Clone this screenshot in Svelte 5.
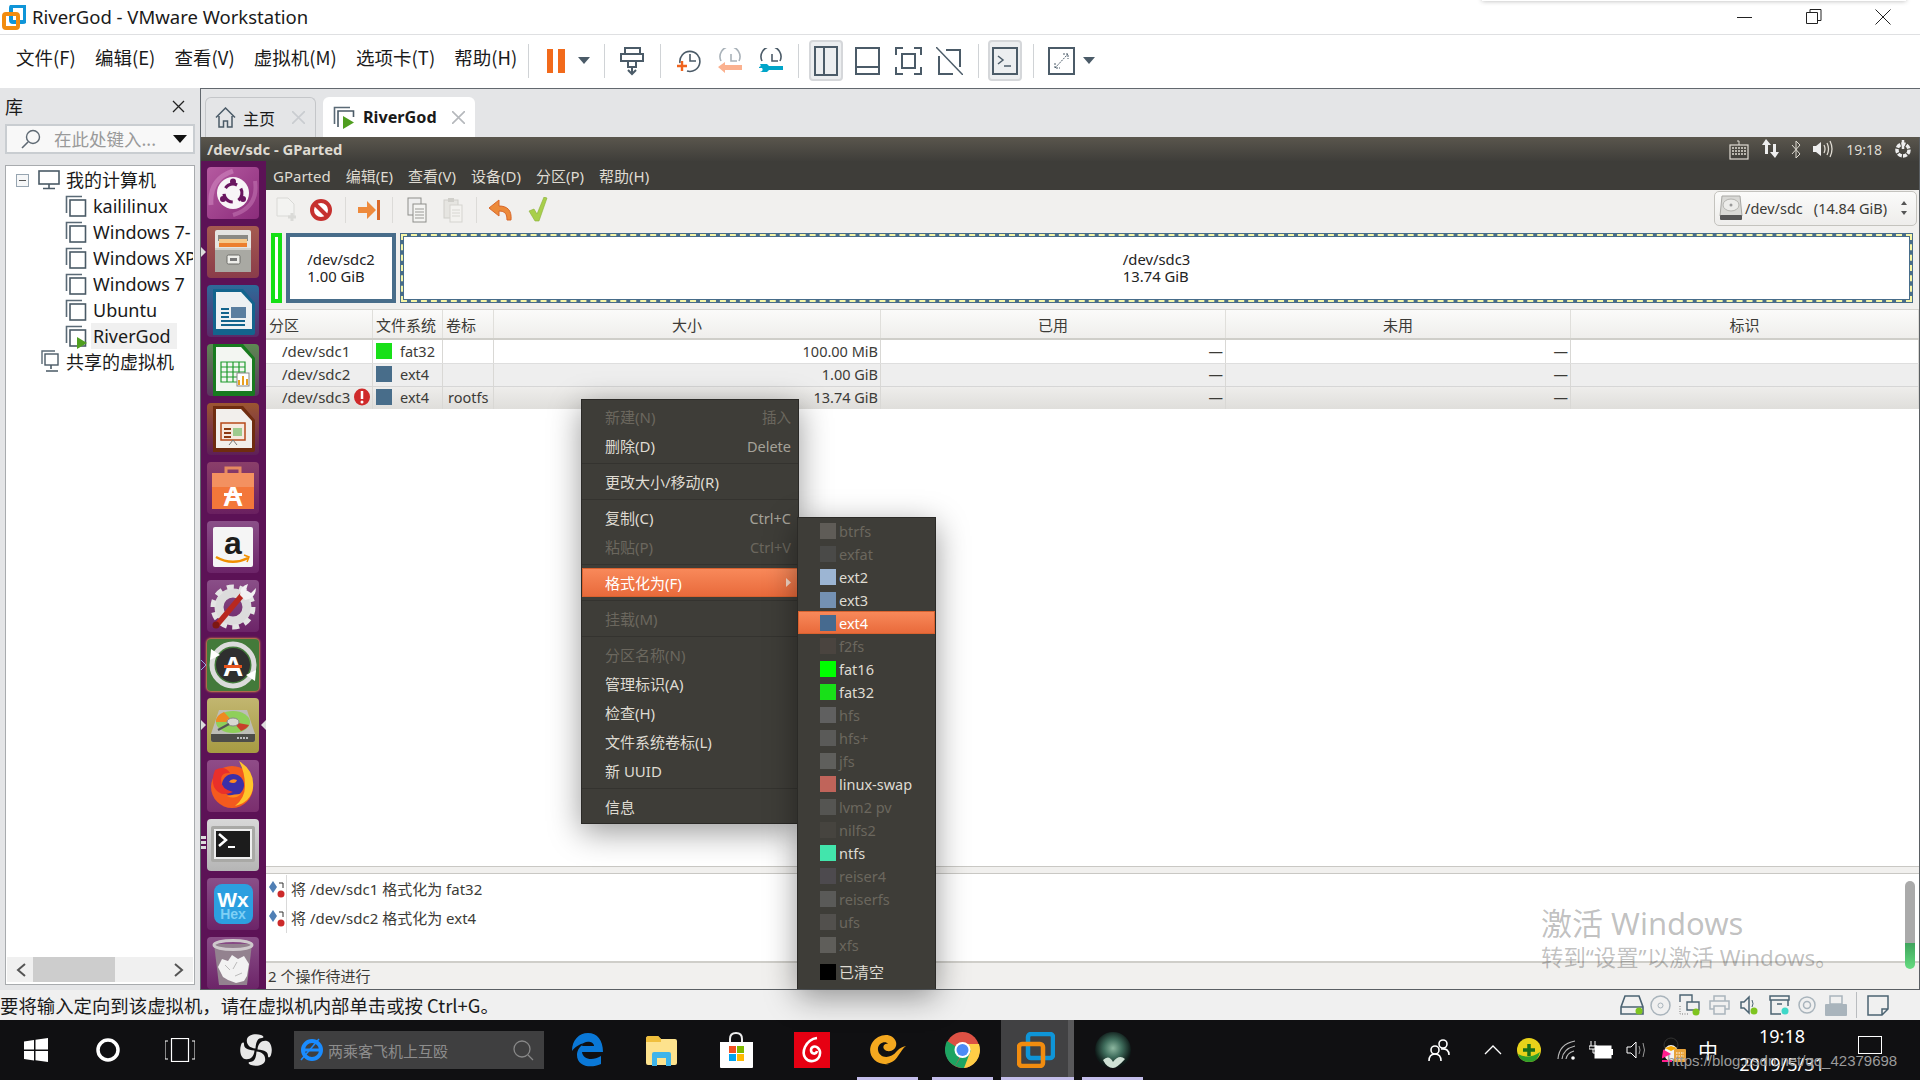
<script>
  const vmNames = ['kaililinux', 'Windows 7-', 'Windows XP', 'Windows 7', 'Ubuntu'];
  const columns = ['分区', '文件系统', '卷标', '大小', '已用', '未用', '标识'];
  const filesystems = [
    ['btrfs', '#5f5c57', 0], ['exfat', '#4a4a48', 0], ['ext2', '#9cb5d3', 1], ['ext3', '#7491b3', 1],
    ['ext4', '#466a8f', 2], ['f2fs', '#4a443f', 0], ['fat16', '#00ff00', 1], ['fat32', '#18e018', 1],
    ['hfs', '#606060', 0], ['hfs+', '#5a5a58', 0], ['jfs', '#5f5f5c', 0], ['linux-swap', '#c0645a', 1],
    ['lvm2 pv', '#555552', 0], ['nilfs2', '#46443f', 0], ['ntfs', '#42e5ac', 1], ['reiser4', '#4d4a4e', 0],
    ['reiserfs', '#5a5a58', 0], ['ufs', '#52504d', 0], ['xfs', '#5f5e5a', 0]
  ];
  const tileKinds = ['ubuntu','files','writer','calc','impress','store','amazon','tools','updater','gparted','firefox','terminal','wxhex','trash'];
</script>

{#snippet vmIcon(run)}
  <svg class="vmi" viewBox="0 0 22 24" width="22" height="24">
    <path d="M1.5 19V2.5H17" fill="none" stroke="#5a6a76" stroke-width="1.6"/>
    <rect x="5" y="6" width="15.5" height="16" fill="#fff" stroke="#4a5a66" stroke-width="1.6"/>
    {#if run}<path d="M12 13l10 6-10 6z" fill="#4f9e1f"/>{/if}
  </svg>
{/snippet}

{#snippet swatch(color)}
  <i class="swatch" style:background={color}></i>
{/snippet}

<div class="screen">
  <header class="title">
    <svg width="24" height="25" viewBox="0 0 24 25"><rect x="9" y="1" width="14" height="16" rx="2" fill="none" stroke="#0f95d8" stroke-width="4"/><rect x="2" y="9" width="14" height="14" rx="2" fill="none" stroke="#f28c0f" stroke-width="4"/></svg>
    <span class="title-text">RiverGod - VMware Workstation</span>
    <div class="win-btns">
      <svg width="16" height="16" viewBox="0 0 16 16"><path d="M0 8.5h15" stroke="#222" stroke-width="1"/></svg>
      <svg width="16" height="16" viewBox="0 0 16 16"><path d="M4 3V.5h11v11h-3M.5 3.5h11v11H.5z" fill="none" stroke="#222"/></svg>
      <svg width="16" height="16" viewBox="0 0 16 16"><path d="M.5.5l15 15M15.5.5l-15 15" stroke="#222" fill="none"/></svg>
    </div>
    <div class="title-shadow"></div>
  </header>

  <div class="bar">
    <nav class="menu">
      <span>文件(F)</span><span>编辑(E)</span><span>查看(V)</span><span>虚拟机(M)</span><span>选项卡(T)</span><span>帮助(H)</span>
    </nav>
    <i class="sep"></i>
    <svg class="ml18" width="18" height="24" viewBox="0 0 18 24"><path d="M0 0h6v24H0zM11 0h7v24h-7z" fill="#f26a1b"/></svg>
    <svg class="ml13" width="12" height="7" viewBox="0 0 12 7"><path d="M0 0h12L6 7z" fill="#4b5b68"/></svg>
    <i class="sep ml14"></i>
    <svg class="ml15" width="24" height="30" viewBox="0 0 24 30"><g fill="none" stroke="#4b5b68" stroke-width="2"><path d="M5 8V2h15v6"/><rect x="1" y="8" width="22" height="7"/><path d="M8 15v6h8v-6M12 21v6M8 24l4 4 4-4"/></g></svg>
    <i class="sep ml16"></i>
    <svg class="ml16" width="24" height="26" viewBox="0 0 24 26"><g fill="none" stroke="#4b5b68" stroke-width="1.6"><path d="M3 15a10 10 0 1 1 7 8"/><path d="M13 6v7h6"/></g><path d="M5 13v10M0 18h10" stroke="#f0641e" stroke-width="2.4"/></svg>
    <svg class="ml17" width="24" height="26" viewBox="0 0 24 26"><g fill="none" stroke="#a9b2b9" stroke-width="1.6"><path d="M3 13a10 10 0 1 1 18 0"/><path d="M13 6v7h6"/></g><path d="M0 19l7-5v3h17v5H7v3z" fill="#fbb18f"/></svg>
    <svg class="ml17" width="24" height="26" viewBox="0 0 24 26"><g fill="none" stroke="#4b5b68" stroke-width="1.6"><path d="M3 13a10 10 0 1 1 18 0"/><path d="M13 6v7h6"/></g><path d="M1 16h7l2 2h14v4H10l-2 2H1c3-1 3-3 2-4H0v-1c2 0 2-2 1-3z" fill="#00a5c9"/></svg>
    <i class="sep ml15"></i>
    <span class="toggle ml10"><svg width="24" height="30" viewBox="0 0 24 30"><rect x="1" y="1" width="22" height="28" fill="none" stroke="#4b5b68" stroke-width="2"/><path d="M10 1v28" stroke="#4b5b68" stroke-width="2"/></svg></span>
    <svg class="ml12" width="25" height="28" viewBox="0 0 25 28"><rect x="1" y="1" width="23" height="26" fill="none" stroke="#4b5b68" stroke-width="2"/><path d="M1 20h23" stroke="#4b5b68" stroke-width="2"/></svg>
    <svg class="ml15" width="27" height="28" viewBox="0 0 27 28"><g fill="none" stroke="#4b5b68" stroke-width="2"><rect x="7" y="7" width="13" height="14"/><path d="M1 8V1h7M19 1h7v7M1 20v7h7M19 27h7v-7"/></g></svg>
    <svg class="ml14" width="27" height="28" viewBox="0 0 27 28"><g fill="none" stroke="#4b5b68" stroke-width="2"><path d="M3 9v18h14M24 20V3H10"/><path d="M0 0l27 28" stroke-width="1.5"/></g></svg>
    <i class="sep ml15"></i>
    <span class="toggle ml9"><svg width="26" height="28" viewBox="0 0 26 28"><rect x="1" y="1" width="24" height="26" fill="none" stroke="#4b5b68" stroke-width="2"/><path d="M6 9l5 4-5 4M12 19h7" fill="none" stroke="#4b5b68" stroke-width="1.5"/></svg></span>
    <i class="sep ml11"></i>
    <svg class="ml14" width="27" height="28" viewBox="0 0 27 28"><rect x="1" y="1" width="25" height="26" fill="none" stroke="#4b5b68" stroke-width="2"/><path d="M7 21L20 7M15 7h5v5M7 16v5h5" fill="none" stroke="#4b5b68" stroke-dasharray="2 1"/></svg>
    <svg class="ml8" width="12" height="7" viewBox="0 0 12 7"><path d="M0 0h12L6 7z" fill="#4b5b68"/></svg>
  </div>

  <div class="work">
    <aside class="lib">
      <div class="lib-head"><span>库</span>
        <svg width="13" height="13" viewBox="0 0 13 13"><path d="M1 1l11 11M12 1L1 12" stroke="#222" stroke-width="1.3"/></svg>
      </div>
      <div class="lib-search">
        <svg width="20" height="20" viewBox="0 0 20 20"><circle cx="12" cy="8" r="6.5" fill="none" stroke="#5e6973" stroke-width="1.4"/><path d="M7 13l-6 6" stroke="#5e6973" stroke-width="1.6"/></svg>
        <span>在此处键入...</span>
        <svg class="search-caret" width="14" height="8" viewBox="0 0 14 8"><path d="M0 0h14L7 8z" fill="#111"/></svg>
      </div>
      <div class="tree">
        <div class="tree-list">
          <div class="node root">
            <svg class="minus" width="13" height="13" viewBox="0 0 13 13"><rect x=".5" y=".5" width="12" height="12" fill="#f6f7f8" stroke="#97a5b1"/><path d="M3 6.5h7" stroke="#555"/></svg>
            <svg class="pc" width="22" height="20" viewBox="0 0 22 20"><rect x="1" y="1" width="20" height="13" fill="none" stroke="#4a5a66" stroke-width="1.6"/><path d="M11 14v4M5 18.500h12" stroke="#4a5a66" stroke-width="1.6"/></svg>
            <span>我的计算机</span>
          </div>
          {#each vmNames as name}
            <div class="node vm">{@render vmIcon(false)}<span class="clip">{name}</span></div>
          {/each}
          <div class="node vm">{@render vmIcon(true)}<span class="sel">RiverGod</span></div>
          <div class="node shared">
            <svg width="20" height="24" viewBox="0 0 20 24"><path d="M1 14V1h13" fill="none" stroke="#5a6a76" stroke-width="1.4"/><rect x="4" y="4" width="13" height="11" fill="#fff" stroke="#4a5a66" stroke-width="1.4"/><path d="M10 15v4M5 21h12" stroke="#4a5a66" stroke-width="1.6"/></svg>
            <span>共享的虚拟机</span>
          </div>
        </div>
        <div class="hscroll">
          <svg width="11" height="14" viewBox="0 0 11 14"><path d="M9 1L2 7l7 6" fill="none" stroke="#555" stroke-width="2"/></svg>
          <i class="thumb"></i>
          <svg class="hs-right" width="11" height="14" viewBox="0 0 11 14"><path d="M2 1l7 6-7 6" fill="none" stroke="#555" stroke-width="2"/></svg>
        </div>
      </div>
    </aside>

    <section class="vmpane">
      <div class="tabs">
        <div class="tab home">
          <svg width="21" height="21" viewBox="0 0 21 21"><path d="M1 10.500L10.500 1 20 10.500M4 9v11h4.500v-6h4v6H17V9" fill="none" stroke="#4b5b68" stroke-width="1.5"/></svg>
          <span>主页</span>
          <svg class="tx" width="13" height="13" viewBox="0 0 13 13"><path d="M0 0l13 13M13 0L0 13" stroke="#c9ccd0" stroke-width="1.6"/></svg>
        </div>
        <div class="tab active">
          <svg width="24" height="24" viewBox="0 0 22 24"><path d="M1.500 19V2.500H17" fill="none" stroke="#5a6a76" stroke-width="1.600"/><path d="M5 22V6h15.500v6" fill="none" stroke="#4a5a66" stroke-width="1.600"/><path d="M10 11l11 6.500L10 24z" fill="#4f9e1f"/></svg>
          <b>RiverGod</b>
          <svg class="tx" width="13" height="13" viewBox="0 0 13 13"><path d="M0 0l13 13M13 0L0 13" stroke="#b5b8bc" stroke-width="1.6"/></svg>
        </div>
      </div>

      <div class="guest">
        <div class="topbar">
          <b>/dev/sdc - GParted</b>
          <div class="indicators">
            <svg width="20" height="22" viewBox="0 0 20 22"><rect x="1" y="7" width="18" height="14" fill="none" stroke="#dfdbd2" stroke-width="1.200"/><path d="M3 10h14M3 13h14M3 16h14" stroke="#dfdbd2" stroke-width="1.600" stroke-dasharray="2 1"/><path d="M10 7V3h-2" fill="none" stroke="#dfdbd2"/></svg>
            <svg class="i1" width="18" height="20" viewBox="0 0 18 20"><path d="M4 0l5 6H6v9H3V6H0zM13 19l-5-6h3V5h3v8h3z" fill="#eee"/></svg>
            <svg class="i2" width="10" height="19" viewBox="0 0 10 19"><path d="M1 5l8 9-4 4V1l4 4-8 9" fill="none" stroke="#dfdbd2"/></svg>
            <svg class="i3" width="20" height="20" viewBox="0 0 20 20"><path d="M0 7h3l5-4v14l-5-4H0z" fill="#eee"/><path d="M11 6q2 4 0 8M14 4q3 6 0 12M17 2q4 8 0 16" fill="none" stroke="#dfdbd2" stroke-width="1.300"/></svg>
            <span class="clock">19:18</span>
            <svg class="i4" width="18" height="18" viewBox="0 0 18 18"><circle cx="9" cy="10" r="6" fill="none" stroke="#eee" stroke-width="3.500" stroke-dasharray="4 1.200"/><path d="M9 0v9" stroke="#eee" stroke-width="2.500"/></svg>
          </div>
        </div>
        <div class="guest-body">
          <div class="launcher">
            {#each tileKinds as kind}
              <div class={'tile ' + kind}>
                <svg width="52" height="52" viewBox="0 0 52 52">
                  {#if kind === 'ubuntu'}
                    <path d="M4 38Q2 12 26 4" fill="none" stroke="#d58fc6" stroke-width="5" opacity=".5"/><path d="M48 14q4 26-22 34" fill="none" stroke="#d58fc6" stroke-width="4" opacity=".4"/>
                    <circle cx="26" cy="26" r="16" fill="#f8f4f7"/><circle cx="26" cy="26" r="9" fill="none" stroke="#6a1560" stroke-width="3.200" stroke-dasharray="13 6" transform="rotate(-30 26 26)"/><circle cx="26" cy="14.500" r="3" fill="#6a1560"/><circle cx="16" cy="32" r="3" fill="#6a1560"/><circle cx="36" cy="32" r="3" fill="#6a1560"/>
                  {:else if kind === 'files'}
                    <path d="M8 6q0-2 2-2h32q2 0 2 2v38q0 2-2 2H10q-2 0-2-2z" fill="#e4e4e1"/><rect x="11" y="9" width="30" height="6" fill="#8a8a84"/><rect x="12" y="13" width="28" height="5" fill="#f5c98a"/><rect x="12" y="17" width="28" height="4" fill="#ec7f2e"/><path d="M8 22h36v24H8z" fill="#a9a9a3"/><path d="M8 22h36v2H8z" fill="#cfcfca"/><rect x="20" y="29" width="13" height="9" rx="1.500" fill="#eeeeea" stroke="#6d6d68"/><rect x="23" y="32" width="7" height="3" fill="#777"/>
                  {:else if kind === 'writer'}
                    <path d="M6 4h30l12 14v30a2 2 0 0 1-2 2H6z" fill="#13648d"/><path d="M9 7h25l11 12v25H9z" fill="#eef1f3"/><path d="M14 24h8M14 28h8M14 32h8M14 36h24M14 40h24" stroke="#13648d" stroke-width="2"/><rect x="24" y="22" width="15" height="11" fill="#5a7ea0"/>
                  {:else if kind === 'calc'}
                    <path d="M6 0h30l12 14v36a2 2 0 0 1-2 2H6z" fill="#187a1f"/><path d="M9 3h25l11 12v32H9z" fill="#f3f6f2"/><path d="M14 18h24v20H14zM14 23h24M14 28h24M14 33h24M20 18v20M26 18v20M32 18v20" fill="none" stroke="#1e9b2c" stroke-width="1.200"/><rect x="30" y="29" width="12" height="13" fill="#fff" stroke="#888"/><path d="M32 41v-5M36 41v-9M40 41v-6" stroke="#e8a020" stroke-width="2"/>
                  {:else if kind === 'impress'}
                    <path d="M6 3h30l12 14v30a2 2 0 0 1-2 2H6z" fill="#6f2c10"/><path d="M9 6h25l11 12v27H9z" fill="#f2efec"/><rect x="14" y="20" width="24" height="17" fill="#f6e9df" stroke="#b6491a" stroke-width="1.500"/><path d="M17 26h7M17 30h7M17 34h7" stroke="#8d3a12" stroke-width="2"/><rect x="26" y="25" width="9" height="8" fill="#9ecb8f"/><path d="M26 37l-4 5M26 37l4 5" stroke="#777"/>
                  {:else if kind === 'store'}
                    <path d="M19 12V6h14v6" fill="none" stroke="#e58a60" stroke-width="3"/><rect x="5" y="11" width="42" height="36" fill="#f3773a"/><rect x="5" y="11" width="42" height="14" fill="#f39160"/><text x="26" y="44" text-anchor="middle" class="svgb" font-size="28" fill="#fff" font-weight="700">A</text><rect x="17" y="31" width="18" height="3" fill="#fff"/>
                  {:else if kind === 'amazon'}
                    <rect x="6" y="6" width="40" height="40" rx="2" fill="#f5f5f5"/><text x="26" y="33" text-anchor="middle" class="svgb" font-size="32" fill="#1d1d1b" font-weight="700">a</text><path d="M9 36q16 9 32 1" fill="none" stroke="#f08f00" stroke-width="2.500"/><path d="M37 34l5 2-2 5" fill="none" stroke="#f08f00" stroke-width="1.500"/>
                  {:else if kind === 'tools'}
                    <circle cx="26" cy="27" r="14" fill="none" stroke="#dcdcdc" stroke-width="9"/><circle cx="26" cy="27" r="20" fill="none" stroke="#e4e4e4" stroke-width="5" stroke-dasharray="7 5.500"/><path d="M9 46l27-32" stroke="#b8281f" stroke-width="5.500"/><circle cx="9" cy="45" r="3.500" fill="#7d1712"/><path d="M33 15q0-9 8-11l-2 6 5 3 5-5q0 10-11 12z" fill="#f2f2f2"/>
                  {:else if kind === 'updater'}
                    <circle cx="26" cy="26" r="21" fill="none" stroke="#dcdcdc" stroke-width="5"/><circle cx="26" cy="26" r="17" fill="#2f2f2f"/><text x="26" y="37" text-anchor="middle" class="svgb" font-size="28" fill="#fff" font-weight="700">A</text><rect x="17" y="26" width="18" height="3" fill="#e8541c"/><path d="M3 21l1-11 9 6zM49 31l-1 11-9-6z" fill="#fff"/>
                  {:else if kind === 'gparted'}
                    <path d="M12 12h28l8 24v6q0 2-2 2H6q-2 0-2-2v-6z" fill="#bdbdb6"/><ellipse cx="26" cy="24" rx="17" ry="11" fill="#8fcf5a"/><path d="M26 24H9a17 11 0 0 1 8-10z" fill="#ee8a22"/><path d="M26 24l16 3a17 11 0 0 1-8 6z" fill="#c8402b"/><ellipse cx="26" cy="24" rx="6" ry="4" fill="#d8d8d2" stroke="#888"/><path d="M11 32l11-6" stroke="#555" stroke-width="2"/><path d="M4 36h44v6q0 2-2 2H6q-2 0-2-2z" fill="#4d4d49"/><path d="M30 40h12" stroke="#bbb" stroke-width="2" stroke-dasharray="2 1"/>
                  {:else if kind === 'firefox'}
                    <circle cx="25" cy="27" r="21" fill="#f45a1e"/><path d="M32 1q16 10 14 27-2 14-18 18 10-8 10-20 0-14-6-25z" fill="#ffc52b"/><circle cx="26" cy="25" r="11" fill="#3b2fa8"/><path d="M30 20q-6-2-8 2 5 2 7 0zM20 36q8 4 14-2-6 0-14 2z" fill="#ff8a1e"/><path d="M8 10q10-5 15 3-9-1-9 7 0 9 12 12-13 6-19-5-3-7 1-17z" fill="#e9302a"/>
                  {:else if kind === 'terminal'}
                    <rect x="4" y="7" width="44" height="36" rx="2" fill="#a9a9a6"/><rect x="7" y="10" width="38" height="30" fill="#eee"/><rect x="9" y="12" width="34" height="26" fill="#1c1c1c"/><path d="M12 15l7 6-7 6" fill="none" stroke="#fff" stroke-width="2.500"/><path d="M21 28h7" stroke="#fff" stroke-width="2"/>
                  {:else if kind === 'wxhex'}
                    <rect x="7" y="6" width="39" height="40" rx="8" fill="#2c9fe0"/><text x="26" y="29" text-anchor="middle" class="svgb" font-size="21" fill="#fff" font-weight="700">Wx</text><text x="26" y="41" text-anchor="middle" class="svgb" font-size="14" fill="#7fd0f5" font-weight="700">Hex</text>
                  {:else}
                    <path d="M7 7h38l-5 41H12z" fill="#93828f"/><ellipse cx="26" cy="8" rx="19" ry="4.500" fill="none" stroke="#cfc9cd" stroke-width="3"/><path d="M11 30l4-8 6 2 4-6 6 4 6-3 5 8-2 12-3 5-8 2-8-3-5-3z" fill="#f2f2f2"/><path d="M18 28l5 5M30 25l-4 7M35 36l-7 3" stroke="#bbb"/>
                  {/if}
                </svg>
              </div>
            {/each}
            <svg class="pip p1" width="5" height="10" viewBox="0 0 5 10"><path d="M0 0l5 5-5 5z" fill="#ddd"/></svg>
            <svg class="pip p2" width="5" height="10" viewBox="0 0 5 10"><path d="M0 0l5 5-5 5" fill="none" stroke="#8fa4dd"/></svg>
            <svg class="pip p3" width="5" height="10" viewBox="0 0 5 10"><path d="M0 0l5 5-5 5z" fill="#ddd"/></svg>
            <svg class="pip p4" width="5" height="10" viewBox="0 0 5 10"><path d="M5 0L0 5l5 5z" fill="#ddd"/></svg>
            <svg class="pip p5" width="5" height="14" viewBox="0 0 5 14"><path d="M0 0h5v3H0zM0 5h5v3H0zM0 10h5v3H0z" fill="#ddd"/></svg>
          </div>

          <main class="gparted">
            <div class="gmenu">
              <span>GParted</span><span>编辑(E)</span><span>查看(V)</span><span>设备(D)</span><span>分区(P)</span><span>帮助(H)</span>
            </div>
            <div class="gtool">
              <svg width="22" height="26" viewBox="0 0 22 26"><path d="M1 1h11l6 6v12H1z" fill="#f3f3f1" stroke="#d9d9d6"/><path d="M16 16v8M12 20h8" stroke="#dadad7" stroke-width="3"/></svg>
              <svg class="g12" width="22" height="24" viewBox="0 0 22 24"><circle cx="11" cy="12" r="9" fill="#fff" stroke="#c6312f" stroke-width="4"/><path d="M5 6l12 12" stroke="#c6312f" stroke-width="4"/></svg>
              <i class="gsep g13"></i>
              <svg class="g12" width="23" height="22" viewBox="0 0 23 22"><path d="M0 8h9V2l9 9-9 9v-6H0z" fill="#ee8a3c"/><path d="M19 1h3v20h-3z" fill="#d9692a"/></svg>
              <i class="gsep g11"></i>
              <svg class="g14" width="20" height="26" viewBox="0 0 20 26"><rect x="1" y="1" width="13" height="17" fill="#eee" stroke="#8e8e8a"/><rect x="6" y="7" width="13" height="18" fill="#f4f4f2" stroke="#8e8e8a"/><path d="M8 12h9M8 15h9M8 18h9M8 21h9" stroke="#9a9a96"/></svg>
              <svg class="g16" width="20" height="26" viewBox="0 0 20 26"><rect x="1" y="3" width="14" height="18" fill="#e6e5e1" stroke="#cfcec9"/><rect x="5" y="1" width="6" height="4" fill="#d0cfca"/><rect x="7" y="8" width="12" height="17" fill="#f3f2ef" stroke="#d5d4cf"/><path d="M9 13h8M9 16h8M9 19h8" stroke="#d8d7d2"/></svg>
              <i class="gsep g13"></i>
              <svg class="g12" width="23" height="22" viewBox="0 0 23 22"><path d="M10 1L0 9l10 8v-5c6 0 8 3 8 9h4c1-10-4-14-12-14z" fill="#ec8a3a" stroke="#d8662a"/></svg>
              <svg class="g16" width="20" height="26" viewBox="0 0 20 26"><path d="M1 14l5-2 3 5 7-17 3 1-8 23H7z" fill="#a8cf4a" stroke="#8aaf3a" stroke-width=".6"/></svg>
              <div class="combo">
                <svg width="24" height="26" viewBox="0 0 24 26"><path d="M3 1h18l2 20H1z" fill="#d9d9d6" stroke="#a8a8a4"/><ellipse cx="12" cy="10" rx="8" ry="6" fill="#ececea" stroke="#b5b5b1"/><circle cx="12" cy="10" r="1.500" fill="#999"/><rect x="1" y="20" width="22" height="5" rx="1" fill="#555"/></svg>
                <span>/dev/sdc</span><span class="combo-size">(14.84 GiB)</span>
                <svg class="combo-arrows" width="8" height="16" viewBox="0 0 8 16"><path d="M4 1l3 4H1zM4 15l3-4H1z" fill="#555"/></svg>
              </div>
            </div>
            <div class="graph">
              <i class="p-sdc1"></i>
              <div class="p-sdc2"><span>/dev/sdc2<br/>1.00 GiB</span></div>
              <div class="p-sdc3"><div class="dash"><div class="p3-in"><span>/dev/sdc3<br/>13.74 GiB</span></div></div></div>
            </div>
            <div class="grid head">
              {#each columns as c}<div>{c}</div>{/each}
            </div>
            <div class="grid row">
              <div class="dev">/dev/sdc1</div><div class="fs">{@render swatch('#18e018')}fat32</div><div></div>
              <div class="num">100.00 MiB</div><div class="num">—</div><div class="num">—</div><div></div>
            </div>
            <div class="grid row alt">
              <div class="dev">/dev/sdc2</div><div class="fs">{@render swatch('#486d8a')}ext4</div><div></div>
              <div class="num">1.00 GiB</div><div class="num">—</div><div class="num">—</div><div></div>
            </div>
            <div class="grid row picked">
              <div class="dev">/dev/sdc3<svg class="warn" width="16" height="18" viewBox="0 0 16 18"><ellipse cx="8" cy="9" rx="8" ry="8.500" fill="#cf2a2a"/><path d="M8 3v8" stroke="#fff" stroke-width="2.500"/><circle cx="8" cy="14" r="1.500" fill="#fff"/></svg></div>
              <div class="fs">{@render swatch('#486d8a')}ext4</div><div class="lbl">rootfs</div>
              <div class="num">13.74 GiB</div><div class="num">—</div><div class="num">—</div><div></div>
            </div>
            <div class="blank"></div>
            <div class="handle"></div>
            <div class="ops">
              {#each ['将 /dev/sdc1 格式化为 fat32', '将 /dev/sdc2 格式化为 ext4'] as op}
                <div class="op">
                  <svg width="16" height="20" viewBox="0 0 16 20"><path d="M4 1l4 6-4 6-4-6z" fill="#4f7fb5"/><path d="M10 3h4v5" fill="none" stroke="#333"/><circle cx="12" cy="14" r="3.500" fill="#cc2a2a"/></svg>
                  <span>{op}</span>
                </div>
              {/each}
            </div>
            <div class="gstatus">2 个操作待进行</div>
          </main>
        </div>
      </div>
    </section>
  </div>

  <footer class="status">
    <span>要将输入定向到该虚拟机，请在虚拟机内部单击或按 Ctrl+G。</span>
    <div class="devs">
      <svg width="24" height="20" viewBox="0 0 24 20"><path d="M1 12L5 1h14l4 11v7H1zM1 12h22" fill="none" stroke="#4b6372" stroke-width="1.600"/><circle cx="19" cy="16" r="3.500" fill="#7ec41f"/></svg>
      <svg class="d6" width="21" height="21" viewBox="0 0 21 21"><circle cx="10.500" cy="10.500" r="9.500" fill="none" stroke="#a9b4bc" stroke-width="1.500"/><circle cx="10.500" cy="10.500" r="2.500" fill="none" stroke="#a9b4bc"/></svg>
      <svg class="d8" width="22" height="22" viewBox="0 0 22 22"><path d="M1 8V1h12v7M8 8h12v8H8z" fill="none" stroke="#4b6372" stroke-width="1.400"/><path d="M1 12v8h8" fill="none" stroke="#777" stroke-dasharray="1 1.500"/><circle cx="17" cy="18" r="3.500" fill="#7ec41f"/></svg>
      <svg class="d8" width="21" height="20" viewBox="0 0 21 20"><path d="M5 6V1h11v5M5 14H1V6h19v8h-4M5 11h11v8H5z" fill="none" stroke="#a9b4bc" stroke-width="1.500"/></svg>
      <svg class="d10" width="19" height="20" viewBox="0 0 19 20"><path d="M1 7h3l5-5v16l-5-5H1z" fill="none" stroke="#4b6372" stroke-width="1.500"/><path d="M12 5q2 4 0 7" fill="none" stroke="#4b6372"/><circle cx="14" cy="16" r="3.500" fill="#7ec41f"/></svg>
      <svg class="d10" width="22" height="20" viewBox="0 0 22 20"><path d="M1 1h19v4H1zM2 5v14h10M19 5v6M8 9h5" fill="none" stroke="#4b6372" stroke-width="1.500"/><circle cx="16" cy="16" r="3.500" fill="#3fd8c8"/></svg>
      <svg class="d7" width="18" height="18" viewBox="0 0 18 18"><circle cx="9" cy="9" r="8" fill="none" stroke="#a9b4bc" stroke-width="1.500"/><circle cx="9" cy="9" r="3.500" fill="none" stroke="#a9b4bc" stroke-width="1.500"/></svg>
      <svg class="d9" width="22" height="21" viewBox="0 0 22 21"><rect x="5" y="1" width="12" height="8" fill="none" stroke="#a9b4bc" stroke-width="1.500"/><rect x="0" y="9" width="22" height="12" rx="1" fill="#a9b4bc"/></svg>
      <i class="dsep"></i>
      <svg class="d10" width="22" height="21" viewBox="0 0 22 21"><path d="M1 1h20v13l-6 6H1zM21 14h-6v6" fill="none" stroke="#4b6372" stroke-width="1.500"/></svg>
    </div>
  </footer>

  <footer class="taskbar">
    <svg class="t24" width="24" height="24" viewBox="0 0 24 24"><path d="M0 3.500l10-1.500v9.500H0zM11.500 1.800L24 0v11.500H11.500zM0 13h10v9.500L0 21zM11.500 13H24v11l-12.500-1.800z" fill="#fff"/></svg>
    <svg class="t48" width="24" height="24" viewBox="0 0 24 24"><circle cx="12" cy="12" r="10" fill="none" stroke="#fff" stroke-width="3.500"/></svg>
    <svg class="t45" width="30" height="24" viewBox="0 0 30 24"><path d="M3 3H0v18h3M27 3h3v18h-3" fill="none" stroke="#fff"/><rect x="6.500" y=".5" width="17" height="23" fill="none" stroke="#fff" stroke-width="1.200"/></svg>
    <svg class="t45" width="32" height="32" viewBox="0 0 32 32"><g fill="#e8e8e8"><path id="leaf" d="M15.500 14.500C9 14 6 10 7 5c1-4 8-6 14-4 3 1 3 3 1 3-4 0-6 3-6.500 10.500z"/><use href="#leaf" transform="rotate(90 16 16)"/><use href="#leaf" transform="rotate(180 16 16)"/><use href="#leaf" transform="rotate(270 16 16)"/></g></svg>
    <div class="tsearch">
      <svg width="23" height="28" viewBox="0 0 23 28"><circle cx="12" cy="14" r="9" fill="none" stroke="#1a8cff" stroke-width="4"/><path d="M3 14h18" stroke="#1a8cff" stroke-width="3"/><path d="M19 3L1 24" stroke="#1a8cff" stroke-width="1.500"/></svg>
      <span>两乘客飞机上互殴</span>
      <svg class="ts-mag" width="21" height="21" viewBox="0 0 21 21"><circle cx="9" cy="9" r="8" fill="none" stroke="#888" stroke-width="1.300"/><path d="M15 15l5 5" stroke="#888" stroke-width="1.300"/></svg>
    </div>
    <svg class="t27" width="32" height="34" viewBox="0 0 32 34"><path d="M1 18C1 7 8 0 17 0c9 0 15 7 15 19H11c1 8 11 9 19 4v8c-11 5-24 2-24-9 0-5 3-9 8-12-6 1-10 4-13 8z" fill="#0a78d7"/><path d="M11 13h12c0-5-11-6-12 0z" fill="#101012"/></svg>
    <svg class="t42" width="33" height="32" viewBox="0 0 33 32"><path d="M1 5q0-3 3-3h9l3 3h14a2 2 0 0 1 2 2v22a2 2 0 0 1-2 2H3a2 2 0 0 1-2-2z" fill="#fde28d"/><path d="M1 5q0-3 3-3h9l3 3v3H1z" fill="#f0bf3c"/><path d="M7 32V20q0-2 2-2h15q2 0 2 2v12h-5v-8h-9v8z" fill="#3eb4ea"/></svg>
    <svg class="t41" width="35" height="36" viewBox="0 0 35 36"><path d="M11 11V7q0-6 6-6t6 6v4" fill="none" stroke="#eee" stroke-width="2"/><path d="M1 10h33v25a1 1 0 0 1-1 1H2a1 1 0 0 1-1-1z" fill="#fff"/><rect x="10" y="14" width="7" height="7" fill="#f25022"/><rect x="18" y="14" width="7" height="7" fill="#7fba00"/><rect x="10" y="22" width="7" height="7" fill="#00a4ef"/><rect x="18" y="22" width="7" height="7" fill="#ffb900"/></svg>
    <svg class="t40" width="36" height="36" viewBox="0 0 36 36"><rect width="36" height="36" fill="#e60012"/><path d="M23 6q-8 1-12 9c-4 9 2 15 8 14 7-1 9-9 5-13-3-3-7-1-7 2 0 4 5 5 6 1" fill="none" stroke="#fff" stroke-width="2.600"/></svg>
    <div class="slot s27">
      <svg width="37" height="32" viewBox="0 0 37 32"><path d="M20 30C6 32-3 20 3 9 9-1 24-2 27 8c2 8-8 12-12 7-2-3 1-6 4-5-2-4-11-1-10 6 1 8 12 10 19 1 3-3 5-4 9-5-3 2-5 6-8 10-3 5-7 7-12 8z" fill="#f4a81f"/></svg>
    </div>
    <div class="slot s14">
      <svg width="35" height="36" viewBox="0 0 35 36"><ellipse cx="17.500" cy="18" rx="17" ry="18" fill="#dd5144"/><path d="M2 9a17 18 0 0 0 8 25l8-15z" fill="#1da462"/><path d="M17 12h17a17 18 0 0 1-17 24l8-17z" fill="#ffcd46"/><path d="M10 34a17 18 0 0 0 9 2l7-18-9 5z" fill="#1da462"/><circle cx="17.500" cy="18" r="8" fill="#fff"/><circle cx="17.500" cy="18" r="6" fill="#4c8bf5"/></svg>
    </div>
    <div class="t-active">
      <svg width="38" height="36" viewBox="0 0 38 36"><rect x="11" y="2" width="25" height="24" rx="3" fill="none" stroke="#0f95d8" stroke-width="4.500"/><rect x="2" y="12" width="24" height="22" rx="3" fill="none" stroke="#f28c0f" stroke-width="4.500"/></svg>
    </div>
    <div class="slot s8">
      <svg width="36" height="36" viewBox="0 0 36 36"><defs><radialGradient id="gl" cx=".5" cy=".45"><stop offset="0" stop-color="#8db7a0"/><stop offset=".5" stop-color="#3f6d5c"/><stop offset="1" stop-color="#0e1a18"/></radialGradient></defs><ellipse cx="18" cy="18" rx="18" ry="18" fill="url(#gl)"/><path d="M8 28q6-6 10 2 6-8 12-3-8 9-12 9-6 0-10-8z" fill="#cfe1d5"/></svg>
    </div>
    <div class="tray">
      <svg width="22" height="24" viewBox="0 0 22 24"><g fill="none" stroke="#fff" stroke-width="1.600"><circle cx="15" cy="6" r="4"/><circle cx="7" cy="12" r="4"/><path d="M1 23q0-7 6-7t6 7M13 11q8-1 8 6"/></g></svg>
      <svg class="x34" width="18" height="10" viewBox="0 0 18 10"><path d="M1 9l8-8 8 8" fill="none" stroke="#fff" stroke-width="1.300"/></svg>
      <svg class="x15" width="24" height="24" viewBox="0 0 24 24"><circle cx="12" cy="12" r="12" fill="#e8d21a"/><path d="M1 16q11 6 22-2-2 10-11 10T1 16z" fill="#2f9e2b"/><path d="M12 6v12M6 12h12" stroke="#1a6e1a" stroke-width="3.500"/></svg>
      <svg class="x16" width="19" height="20" viewBox="0 0 19 20"><g fill="none" stroke="#b9b9b9" stroke-width="1.200"><path d="M1 19q1-15 17-18M5 19q1-10 13-13M9 19q1-6 8-8"/></g><circle cx="16" cy="18" r="1.800" fill="#fff"/></svg>
      <svg class="x13" width="24" height="20" viewBox="0 0 24 20"><path d="M2 1v5M6 1v5M0 6h8v3H0zM4 9v4h3" fill="none" stroke="#fff"/><rect x="6" y="6" width="16" height="12" fill="#fff" stroke="#fff"/><rect x="22" y="9" width="2" height="6" fill="#fff"/></svg>
      <svg class="x13" width="21" height="20" viewBox="0 0 21 20"><path d="M1 7h4l5-5v16l-5-5H1z" fill="none" stroke="#fff"/><path d="M13 6q2 4 0 8M17 3q3 7 0 14" fill="none" stroke="#999"/></svg>
      <svg class="x15" width="24" height="26" viewBox="0 0 24 26"><ellipse cx="9" cy="8" rx="7" ry="7" fill="#111" stroke="#333"/><ellipse cx="9" cy="16" rx="7" ry="8" fill="#f2f2f2"/><path d="M3 11l6 3 6-3-6-2z" fill="#f7a800"/><path d="M2 14l-1 6 6-3zM0 24h10" stroke="#ff1f8f" stroke-width="2" fill="#ff1f8f"/><rect x="12" y="12" width="12" height="13" rx="1" fill="#e8a23a"/><path d="M14 16h8M14 19h8M14 22h8" stroke="#fff" stroke-dasharray="1.500 1"/></svg>
      <span class="ime">中</span>
      <div class="clockbox"><span>19:18</span><span>2019/5/31</span></div>
      <svg class="notif" width="24" height="18" viewBox="0 0 24 18"><rect x=".5" y=".5" width="23" height="17" fill="none" stroke="#fff"/></svg>
    </div>
  </footer>

  <div class="ctx">
    <div class="ci off"><span>新建(N)</span><em>插入</em></div>
    <div class="ci"><span>删除(D)</span><em>Delete</em></div>
    <hr/>
    <div class="ci"><span>更改大小/移动(R)</span></div>
    <hr/>
    <div class="ci"><span>复制(C)</span><em>Ctrl+C</em></div>
    <div class="ci off"><span>粘贴(P)</span><em>Ctrl+V</em></div>
    <hr/>
    <div class="ci on"><span>格式化为(F)</span><svg width="5" height="9" viewBox="0 0 5 9"><path d="M0 0l5 4.500L0 9z" fill="#f6d9c8"/></svg></div>
    <hr/>
    <div class="ci off"><span>挂载(M)</span></div>
    <hr/>
    <div class="ci off"><span>分区名称(N)</span></div>
    <div class="ci"><span>管理标识(A)</span></div>
    <div class="ci"><span>检查(H)</span></div>
    <div class="ci"><span>文件系统卷标(L)</span></div>
    <div class="ci"><span>新 UUID</span></div>
    <hr/>
    <div class="ci"><span>信息</span></div>
  </div>

  <div class="sub">
    {#each filesystems as f}
      <div class="si" class:off={f[2] === 0} class:on={f[2] === 2}>
        {@render swatch(f[1])}<span>{f[0]}</span>
      </div>
    {/each}
    <div class="si clear">{@render swatch('#000')}<span>已清空</span></div>
  </div>

  <div class="activate"><div class="a1">激活 Windows</div><div class="a2">转到“设置”以激活 Windows。</div></div>
  <div class="gscroll"></div>
  <div class="csdn">https://blog.csdn.net/qq_42379698</div>
</div>

<style>
  :global(body) { margin: 0; overflow: hidden; background: #fff; }
  .screen { position: relative; width: 1920px; height: 1080px; overflow: hidden; display: flex; flex-direction: column; font-family: "Noto Sans", "Noto Sans CJK SC", sans-serif; color: #1a1a1a; }
  svg { display: block; flex: none; }
  .svgb { font-family: "Liberation Sans", sans-serif; }

  .title { height: 34px; flex: none; display: flex; align-items: center; padding-left: 2px; background: #fff; border-bottom: 1px solid #dfe0e2; position: relative; }
  .title-text { margin-left: 6px; margin-bottom: 2px; font: 18.5px "Noto Sans", sans-serif; white-space: nowrap; }
  .win-btns { margin-left: auto; display: flex; gap: 53px; margin-right: 29px; }
  .title-shadow { position: absolute; left: 1482px; width: 424px; top: -4px; height: 5px; box-shadow: 0 0 5px rgba(0,0,0,.3); }

  .bar { height: 53px; flex: none; box-sizing: border-box; padding-bottom: 2px; display: flex; align-items: center; background: #fff; }
  .menu { width: 528px; flex: none; box-sizing: border-box; padding-left: 16px; margin-bottom: 7px; display: flex; gap: 19.2px; font: 18.5px "Noto Sans CJK SC", sans-serif; white-space: nowrap; }
  .sep { width: 1px; height: 34px; background: #d0d3d6; flex: none; }
  .toggle { width: 34px; height: 41px; box-sizing: border-box; background: #eceef0; border: 2px solid #d5d7da; border-radius: 4px; display: flex; align-items: center; justify-content: center; flex: none; }
  .ml8 { margin-left: 8px; } .ml9 { margin-left: 9px; } .ml10 { margin-left: 10px; } .ml11 { margin-left: 11px; }
  .ml12 { margin-left: 12px; } .ml13 { margin-left: 13px; } .ml14 { margin-left: 14px; } .ml15 { margin-left: 15px; }
  .ml16 { margin-left: 16px; } .ml17 { margin-left: 17px; } .ml18 { margin-left: 18px; }

  .work { flex: 1; min-height: 0; display: flex; background: #e4e5e7; }
  .lib { width: 200px; flex: none; box-sizing: border-box; padding: 0 5px 5px; display: flex; flex-direction: column; }
  .lib-head { height: 36px; flex: none; display: flex; align-items: center; justify-content: space-between; padding-right: 10px; font: 18px "Noto Sans CJK SC", sans-serif; }
  .lib-search { height: 30px; flex: none; box-sizing: border-box; border: 2px solid #c9cdd1; background: #f8f8f8; display: flex; align-items: center; padding-left: 14px; color: #9a9a9a; font: 17.5px "Noto Sans CJK SC", sans-serif; white-space: nowrap; }
  .lib-search span { margin-left: 13px; margin-top: -2px; }
  .search-caret { margin-left: auto; margin-right: 6px; }
  .tree { margin-top: 11px; flex: 1; min-height: 0; background: #fff; border: 1px solid #a8abae; display: flex; flex-direction: column; }
  .tree-list { flex: 1; padding-top: 1px; font-size: 18px; overflow: hidden; }
  .node { height: 26px; display: flex; align-items: center; white-space: nowrap; font-family: "Noto Sans", "Noto Sans CJK SC", sans-serif; }
  .root { padding-left: 10px; }
  .root span, .shared span { margin-top: -2px; }
  .root .pc { margin-left: 9px; margin-right: 6px; }
  .vm { padding-left: 59px; }
  .vm .vmi { margin-right: 6px; overflow: visible; }
  .vm .clip { max-width: 100px; overflow: hidden; }
  .sel { background: #f0f0f0; padding: 0 6px 0 2px; margin-left: -2px; height: 26px; line-height: 26px; }
  .shared { padding-left: 35px; }
  .shared svg { margin-right: 5px; }
  .hscroll { height: 25px; flex: none; margin: 0 1px 2px; background: #f0f0f0; display: flex; align-items: center; padding-left: 9px; }
  .thumb { width: 82px; height: 25px; background: #cdcdcd; margin-left: 6px; }
  .hs-right { margin-left: auto; margin-right: 9px; }

  .vmpane { flex: 1; min-width: 0; display: flex; flex-direction: column; border-top: 1px solid #62686e; border-left: 1px solid #62686e; }
  .tabs { height: 48px; flex: none; display: flex; align-items: flex-end; padding-left: 4px; gap: 7px; }
  .tab { height: 40px; box-sizing: border-box; display: flex; align-items: center; border-radius: 6px 6px 0 0; white-space: nowrap; }
  .tab.home { width: 111px; border: 1px solid #c4c6c9; border-bottom: 0; padding-left: 9px; font: 16px "Noto Sans CJK SC", sans-serif; }
  .tab.home span { margin-left: 7px; }
  .tab.home .tx { margin-left: 17px; }
  .tab.active { width: 152px; background: #fff; padding-left: 9px; }
  .tab.active b { margin-left: 7px; font-size: 16.2px; }
  .tab.active .tx { margin-left: auto; margin-right: 10px; }

  .guest { flex: 1; min-height: 0; display: flex; flex-direction: column; font-size: 14.5px; border-bottom: 1px solid #5a5f63; border-right: 1px solid #5a5f63; }
  .topbar { height: 24px; flex: none; display: flex; align-items: center; background: linear-gradient(#5a564d, #3f3e3a); color: #dfdbd2; padding-left: 6px; }
  .topbar b { font-size: 14.8px; }
  .indicators { margin-left: auto; display: flex; align-items: center; color: #dfdbd2; }
  .i1 { margin-left: 13px; } .i2 { margin-left: 11px; } .i3 { margin-left: 12px; }
  .clock { margin-left: 13px; font-size: 14px; }
  .i4 { margin-left: 12px; margin-right: 7px; }

  .guest-body { flex: 1; min-height: 0; display: flex; }
  .launcher { width: 65px; flex: none; background: #5c1256; padding: 6px 0 0 6px; box-sizing: border-box; display: flex; flex-direction: column; gap: 7px; position: relative; }
  .tile { width: 52px; height: 52px; border-radius: 4px; background: linear-gradient(#8a4f88, #6c2468); flex: none; }
  .tile.ubuntu { background: linear-gradient(135deg, #b55aa0, #8b2c7b); }
  .tile.files { background: linear-gradient(#a55a50, #8a3c4a); }
  .tile.writer { background: linear-gradient(#2d6a9a, #5b2a68); }
  .tile.calc { background: linear-gradient(#5d8a52, #5b3560); }
  .tile.impress { background: linear-gradient(#9c5530, #5e1f58); }
  .tile.store { background: linear-gradient(#8a3f6a, #6a2060); }
  .tile.updater { background: #437a3a; box-shadow: 0 0 2px 1px #d08a4a; }
  .tile.gparted { background: linear-gradient(#c2b670, #a69a42); }
  .tile.terminal { background: linear-gradient(#d8d8d8, #b5b5b5); }
  .tile.firefox { background: linear-gradient(#8f4c88, #7a2e6e); }
  .pip { position: absolute; left: 0; }
  .p1 { top: 86px; } .p2 { top: 499px; } .p3 { top: 559px; } .p4 { top: 559px; left: 60px; } .p5 { top: 675px; }

  .gparted { flex: 1; min-width: 0; background: #fff; display: flex; flex-direction: column; color: #3c3b37; }
  .gmenu { height: 29px; flex: none; background: #3e3d39; color: #dfdbd2; display: flex; align-items: center; padding-left: 7px; gap: 15px; font-size: 15px; font-family: "Noto Sans", "Noto Sans CJK SC", sans-serif; }
  .gtool { height: 43px; flex: none; box-sizing: border-box; padding: 0 0 4px 10px; background: #f1f0ee; display: flex; align-items: center; }
  .g11 { margin-left: 11px; } .g12 { margin-left: 12px; } .g13 { margin-left: 13px; } .g14 { margin-left: 14px; } .g16 { margin-left: 16px; }
  .gsep { width: 1px; height: 26px; background: #dcdbd8; flex: none; }
  .combo { margin-left: auto; margin-right: 2px; margin-top: -3px; width: 203px; height: 35px; box-sizing: border-box; border: 1px solid #c4c3be; border-radius: 5px; background: linear-gradient(#fbfbfa, #eeedeb); display: flex; align-items: center; padding-left: 4px; font-size: 14.5px; white-space: nowrap; }
  .combo span:first-of-type { margin-left: 2px; }
  .combo-size { margin-left: 11px; }
  .combo-arrows { margin-left: auto; margin-right: 8px; }
  .graph { height: 76px; flex: none; box-sizing: border-box; background: #f1f0ee; display: flex; padding: 0 6px 6px 5px; gap: 4px; color: #222; font-size: 14.8px; }
  .p-sdc1 { width: 11px; box-sizing: border-box; border: 4px solid #14e014; background: #fff; flex: none; }
  .p-sdc2 { width: 110px; box-sizing: border-box; border: 4px solid #486d8a; background: #fff; flex: none; display: flex; align-items: center; justify-content: center; line-height: 17px; }
  .p-sdc3 { flex: 1; background: #486d8a; padding: 1px; display: flex; }
  .dash { flex: 1; border: 2px dashed #f5f5a8; display: flex; }
  .p3-in { flex: 1; margin: 1px; background: #fff; display: flex; align-items: center; justify-content: center; line-height: 17px; }
  .grid { display: grid; grid-template-columns: 107px 70px 51px 387px 345px 345px 1fr; flex: none; }
  .head { height: 31px; box-sizing: border-box; background: linear-gradient(#fbfbfa, #efeeec); border-top: 1px solid #d5d4d0; border-bottom: 2px solid #cfcec9; font-family: "Noto Sans CJK SC", sans-serif; font-size: 15px; }
  .head div { display: flex; align-items: center; justify-content: center; border-right: 1px solid #e0dfdb; }
  .head div:nth-child(-n+3) { justify-content: flex-start; padding-left: 3px; }
  .row { height: 23px; box-sizing: border-box; background: #fff; }
  .row div { display: flex; align-items: center; border-right: 1px solid #d9d8d5; padding-bottom: 1px; }
  .row.alt { background: #eeeeee; border-top: 1px solid #dedede; }
  .row.picked { background: linear-gradient(#eeedeb, #dfdedb); border-top: 1px solid #d6d6d6; }
  .row.alt div, .row.picked div { padding-bottom: 2px; }
  .dev { padding-left: 16px; white-space: nowrap; font-size: 15px; }
  .warn { margin-left: 4px; }
  .fs { padding-left: 3px; }
  .swatch { display: block; width: 16px; height: 16px; flex: none; margin-right: 8px; }
  .lbl { padding-left: 5px; }
  .num { justify-content: flex-end; padding-right: 2px; }
  .blank { flex: 1; background: #fff; }
  .handle { height: 8px; flex: none; box-sizing: border-box; background: #f1f0ee; border-top: 1px solid #c9c8c4; border-bottom: 1px solid #c9c8c4; }
  .ops { height: 87px; flex: none; background: #fff; padding-top: 1px; box-sizing: border-box; font-size: 15px; }
  .op { height: 29px; display: flex; align-items: center; padding-left: 3px; white-space: nowrap; }
  .op svg { margin-right: 1px; }
  .op span { border-left: 1px solid #d9d9d9; padding-left: 4px; height: 29px; line-height: 29px; }
  .gstatus { height: 28px; flex: none; box-sizing: border-box; background: #f1f0ee; border-top: 2px solid #cfcec9; padding: 0 0 1px 2px; display: flex; align-items: center; font-size: 15px; }

  .status { height: 30px; flex: none; background: #f0f0f0; display: flex; align-items: center; font: 18.4px "Noto Sans CJK SC", sans-serif; white-space: nowrap; }
  .devs { margin-left: auto; margin-right: 31px; display: flex; align-items: center; }
  .d6 { margin-left: 6px; } .d7 { margin-left: 7px; } .d8 { margin-left: 8px; } .d9 { margin-left: 9px; } .d10 { margin-left: 10px; }
  .dsep { width: 1px; height: 26px; background: #b9bcbf; margin-left: 9px; }

  .taskbar { height: 60px; flex: none; background: #101012; display: flex; align-items: center; position: relative; }
  .t24 { margin-left: 24px; } .t48 { margin-left: 48px; } .t45 { margin-left: 45px; } .t27 { margin-left: 27px; } .t42 { margin-left: 42px; } .t41 { margin-left: 41px; } .t40 { margin-left: 40px; }
  .slot { width: 61px; height: 60px; box-sizing: border-box; border-bottom: 3px solid #c3bdea; padding-top: 3px; display: flex; align-items: center; justify-content: center; flex: none; }
  .s27 { margin-left: 27px; } .s14 { margin-left: 14px; } .s8 { margin-left: 8px; }
  .tsearch { margin-left: 22px; width: 250px; height: 38px; background: #3f3f40; display: flex; align-items: center; padding-left: 6px; box-sizing: border-box; color: #8d8d8d; font: 15px "Noto Sans CJK SC", sans-serif; white-space: nowrap; }
  .tsearch span { margin-left: 5px; }
  .ts-mag { margin-left: auto; margin-right: 10px; }
  .t-active { margin-left: 8px; width: 73px; height: 60px; box-sizing: border-box; background: linear-gradient(90deg, #414143 92%, #58585a 92%); display: flex; align-items: center; justify-content: center; padding: 3px 4px 0 0; border-bottom: 3px solid #c3bdea; flex: none; }
  .tray { margin-left: auto; display: flex; align-items: center; padding-right: 38px; color: #fff; }
  .x34 { margin-left: 34px; } .x15 { margin-left: 15px; } .x16 { margin-left: 16px; } .x13 { margin-left: 13px; }
  .ime { margin-left: 12px; font: 20px "Noto Sans CJK SC", sans-serif; }
  .clockbox { width: 92px; margin-left: 18px; display: flex; flex-direction: column; align-items: center; font: 18px/28px "Noto Sans", sans-serif; white-space: nowrap; }
  .notif { margin-left: 30px; margin-top: -10px; }

  .ctx { position: absolute; left: 581px; top: 399px; width: 218px; height: 425px; box-sizing: border-box; padding-top: 2px; background: #3e3d38; border: 1px solid #2b2a27; box-shadow: 0 8px 30px rgba(0,0,0,.4); font-size: 15px; color: #dfdbd2; font-family: "Noto Sans", "Noto Sans CJK SC", sans-serif; }
  .ctx hr { height: 7px; margin: 0; border: 0; box-sizing: border-box; background: linear-gradient(transparent 3px, #34332f 3px, #34332f 4px, transparent 4px); }
  .ci { height: 29px; display: flex; align-items: center; justify-content: space-between; padding: 0 7px 0 23px; white-space: nowrap; box-sizing: border-box; }
  .ci em { font-style: normal; color: #a5a299; font-size: 14.5px; }
  .ci.off, .ci.off em { color: #6b675e; }
  .ci.on, .si.on { background: linear-gradient(#f98a5b, #e8693a); box-shadow: inset 0 0 0 1px #d9622f; color: #fff; }
  .sub { position: absolute; left: 797px; top: 517px; width: 139px; height: 472px; box-sizing: border-box; padding-top: 1px; background: #3e3d38; border: 1px solid #2b2a27; border-bottom: 0; box-shadow: 0 8px 30px rgba(0,0,0,.4); font-size: 14.5px; color: #dfdbd2; }
  .si { height: 23px; display: flex; align-items: center; padding-left: 22px; white-space: nowrap; }
  .si .swatch { margin-right: 3px; }
  .si.off { color: #6b675e; }
  .si.clear { margin-top: 4px; font-family: "Noto Sans CJK SC", sans-serif; font-size: 15px; }

  .activate { position: absolute; left: 1541px; top: 903px; color: rgba(60,60,60,.32); white-space: nowrap; font-family: "Noto Sans", "Noto Sans CJK SC", sans-serif; }
  .a1 { font-size: 31px; line-height: 40px; }
  .a2 { font-size: 22.4px; line-height: 30px; }
  .gscroll { position: absolute; left: 1905px; top: 881px; width: 10px; height: 88px; border-radius: 5px; background: linear-gradient(#aaa 70%, #3fa35c 70%, #65dc80); }
  .csdn { position: absolute; left: 1667px; top: 1050px; font: 15px/22px "Liberation Sans", sans-serif; color: #9b9b9b; white-space: nowrap; }
</style>
